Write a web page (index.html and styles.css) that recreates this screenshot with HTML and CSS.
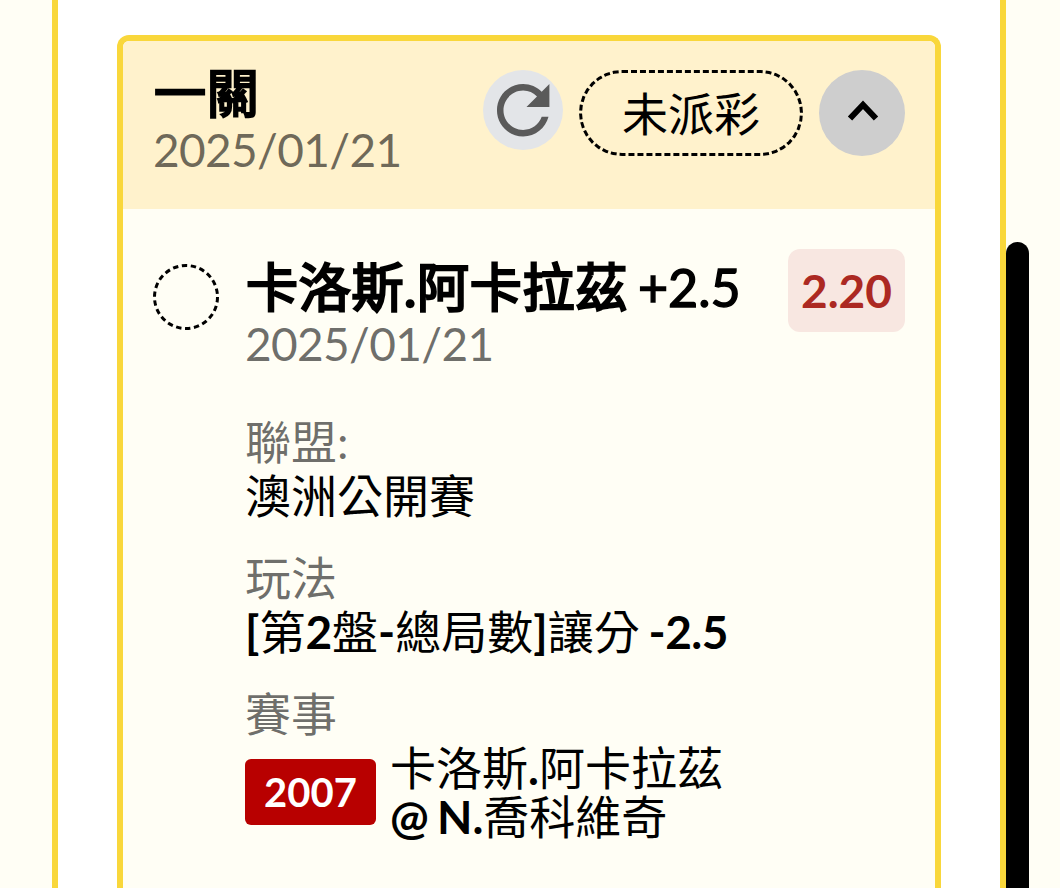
FILE: index.html
```html
<!DOCTYPE html>
<html lang="zh-Hant">
<head>
  <meta charset="UTF-8">
  <title>注單明細</title>
  <link rel="stylesheet" href="styles.css">
</head>
<body>
  <div class="panel">
    <div class="card">
      <div class="card-header">
        <div class="card-title">
          <h1>一關</h1>
          <p class="date">2025/01/21</p>
        </div>
        <button class="refresh" aria-label="重新整理">
          <svg width="80" height="80" viewBox="0 0 80 80">
            <path transform="translate(.8 .9) scale(3.28)" fill="#5a5a5a" d="M17.65 6.35C16.2 4.9 14.21 4 12 4c-4.42 0-7.99 3.58-7.99 8s3.57 8 7.99 8c3.73 0 6.84-2.55 7.73-6h-2.08c-.82 2.33-3.04 4-5.65 4-3.31 0-6-2.69-6-6s2.69-6 6-6c1.66 0 3.14.69 4.22 1.78L13 11h7V4l-2.35 2.35z"/>
          </svg>
        </button>
        <span class="status">未派彩</span>
        <button class="toggle" aria-label="收合">
          <svg width="86" height="86" viewBox="0 0 86 86">
            <path d="M31 48.5L44 34.8L57 48.5" fill="none" stroke="#000" stroke-width="6"/>
          </svg>
        </button>
      </div>

      <div class="bet">
        <svg class="bet-mark" width="66" height="66" viewBox="0 0 66 66">
          <circle cx="33" cy="33" r="31.5" fill="none" stroke="#000" stroke-width="3" stroke-dasharray="5.4 3.6"/>
        </svg>
        <div class="bet-info">
          <h2>卡洛斯.阿卡拉茲 <span class="handicap">+2.5</span></h2>
          <p class="date">2025/01/21</p>
          <dl>
            <dt>聯盟:</dt>
            <dd>澳洲公開賽</dd>
            <dt>玩法</dt>
            <dd><b>[</b>第<b>2</b>盤<b>-</b>總局數<b>]</b>讓分 <b class="line">-2.5</b></dd>
            <dt>賽事</dt>
            <dd class="match">
              <span class="match-no">2007</span>
              <span class="teams">卡洛斯<b>.</b>阿卡拉茲<br><b>@ N.</b>喬科維奇</span>
            </dd>
          </dl>
        </div>
        <span class="odds">2.20</span>
      </div>
    </div>
  </div>
  <div class="scrollbar"></div>
</body>
</html>
```

FILE: styles.css
```css
* {
  box-sizing: border-box;
  margin: 0;
  padding: 0;
}

body {
  height: 888px;
  overflow: hidden;
  background-color: #fffef5;
  font-family: Lato, "Noto Sans CJK TC", sans-serif;
  font-size: 46px;
  color: #000;
}

.panel {
  width: 954px;
  height: 888px;
  margin-left: 52px;
  padding: 35px 59px 0;
  background-color: #fff;
  border: solid #f9d73b;
  border-width: 0 6px;
}

.card {
  width: 824px;
  height: 853px;
  background-color: #fffef5;
  border: 6px solid #f9d73b;
  border-bottom: none;
  border-radius: 12px 12px 0 0;
  overflow: hidden;
}

.card-header {
  display: flex;
  align-items: flex-start;
  height: 168px;
  padding: 29px 30px 0;
  background-color: #fff2cc;
}

.card-title {
  flex: 1;
  margin-top: -4px;
}

h1, h2 {
  padding-left: 1px;
  font-size: 52px;
  line-height: 54px;
  font-weight: normal;
  letter-spacing: 0.7px;
  white-space: nowrap;
  -webkit-text-stroke: 2.4px #000;
}

.handicap {
  margin-left: -4px;
  letter-spacing: 0;
  -webkit-text-stroke-width: 1.4px;
}

.date {
  color: rgba(0, 0, 0, 0.58);
  letter-spacing: -0.65px;
  line-height: 60px;
}

button {
  border: none;
  border-radius: 50%;
}

button svg {
  display: block;
}

.refresh {
  width: 80px;
  height: 80px;
  background-color: #e3e5e8;
}

.status {
  width: 224px;
  height: 86px;
  margin: 0 16px;
  border: 3px dashed #000;
  border-radius: 43px;
  line-height: 82px;
  text-align: center;
}

.toggle {
  width: 86px;
  height: 86px;
  background-color: #cecece;
}

.bet {
  display: flex;
  align-items: flex-start;
  padding: 40px 30px 0;
}

.bet-mark {
  margin: 15px 26px 0 0;
}

.bet-info {
  flex: 1;
  padding-top: 11px;
}

dl {
  margin-top: 41px;
}

dt, dd {
  line-height: 54px;
}

dt {
  color: rgba(0, 0, 0, 0.58);
}

dd {
  margin-bottom: 28px;
  word-spacing: -3px;
}

.line {
  letter-spacing: -0.5px;
}

.match {
  display: flex;
  align-items: center;
  gap: 14px;
  margin: 2px 0 0;
}

.match-no {
  width: 131px;
  height: 66px;
  background-color: #b80000;
  border-radius: 6px;
  color: #fff;
  font-size: 40px;
  font-weight: bold;
  line-height: 66px;
  text-align: center;
}

.teams {
  line-height: 49px;
}

.odds {
  width: 117px;
  height: 83px;
  background-color: #f8e7e1;
  border-radius: 12px;
  color: #ac2922;
  font-weight: bold;
  line-height: 84px;
  text-align: center;
}

.scrollbar {
  position: absolute;
  top: 242px;
  left: 1006px;
  width: 23px;
  height: 646px;
  background-color: #000;
  border-radius: 12px 12px 0 0;
}
```
